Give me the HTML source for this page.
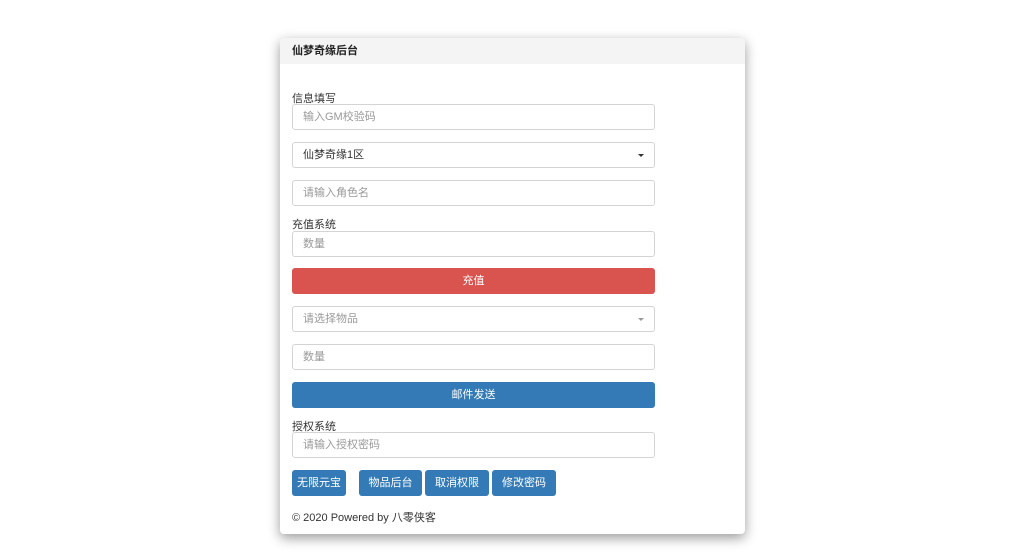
<!DOCTYPE html>
<html><head><meta charset="utf-8"><style>
body{margin:0;background:#fff;font-family:"Liberation Sans","Noto Sans CJK SC",sans-serif;font-size:11px;color:#333;width:1024px;height:559px;position:relative;overflow:hidden}
.card{position:absolute;left:280px;top:38px;width:465px;height:496px;background:#fff;border-radius:4px;box-shadow:0 4px 12px rgba(0,0,0,.4)}
.hd{height:26px;background:#f4f4f4;border-radius:4px 4px 0 0;font-weight:bold;line-height:26px;padding-left:12px;font-size:11px;color:#222}
.a{position:absolute;left:12px;width:363px}
.in{height:24px;border:1px solid #d4d4d4;border-radius:3px;line-height:24px;padding-left:10px;box-sizing:content-box;width:351px;color:#999}
.lb{color:#333;font-size:11px}
.btn{height:26px;border-radius:3px;color:#fff;text-align:center;line-height:26px}
.car{position:absolute;right:10px;top:11px;width:0;height:0;border-left:3px solid transparent;border-right:3px solid transparent;border-top:3px solid #333}
.sb{position:absolute;top:432px;height:26px;background:#337ab7;color:#fff;border-radius:3px;text-align:center;line-height:26px}
</style></head><body>
<div class="card">
<div class="hd">仙梦奇缘后台</div>
<div class="a lb" style="top:52px">信息填写</div>
<div class="a in" style="top:66px">输入GM校验码</div>
<div class="a in" style="top:104px;color:#333">仙梦奇缘1区<span class="car"></span></div>
<div class="a in" style="top:142px">请输入角色名</div>
<div class="a lb" style="top:178px">充值系统</div>
<div class="a in" style="top:193px">数量</div>
<div class="a btn" style="top:230px;background:#d9534f">充值</div>
<div class="a in" style="top:268px">请选择物品<span class="car" style="border-top-color:#999"></span></div>
<div class="a in" style="top:306px">数量</div>
<div class="a btn" style="top:344px;background:#337ab7">邮件发送</div>
<div class="a lb" style="top:380px">授权系统</div>
<div class="a in" style="top:394px">请输入授权密码</div>
<div class="sb" style="left:12px;width:54px">无限元宝</div>
<div class="sb" style="left:79px;width:63px">物品后台</div>
<div class="sb" style="left:145px;width:64px">取消权限</div>
<div class="sb" style="left:212px;width:64px">修改密码</div>
<div class="a" style="top:471px">© 2020 Powered by 八零侠客</div>
</div>
</body></html>
